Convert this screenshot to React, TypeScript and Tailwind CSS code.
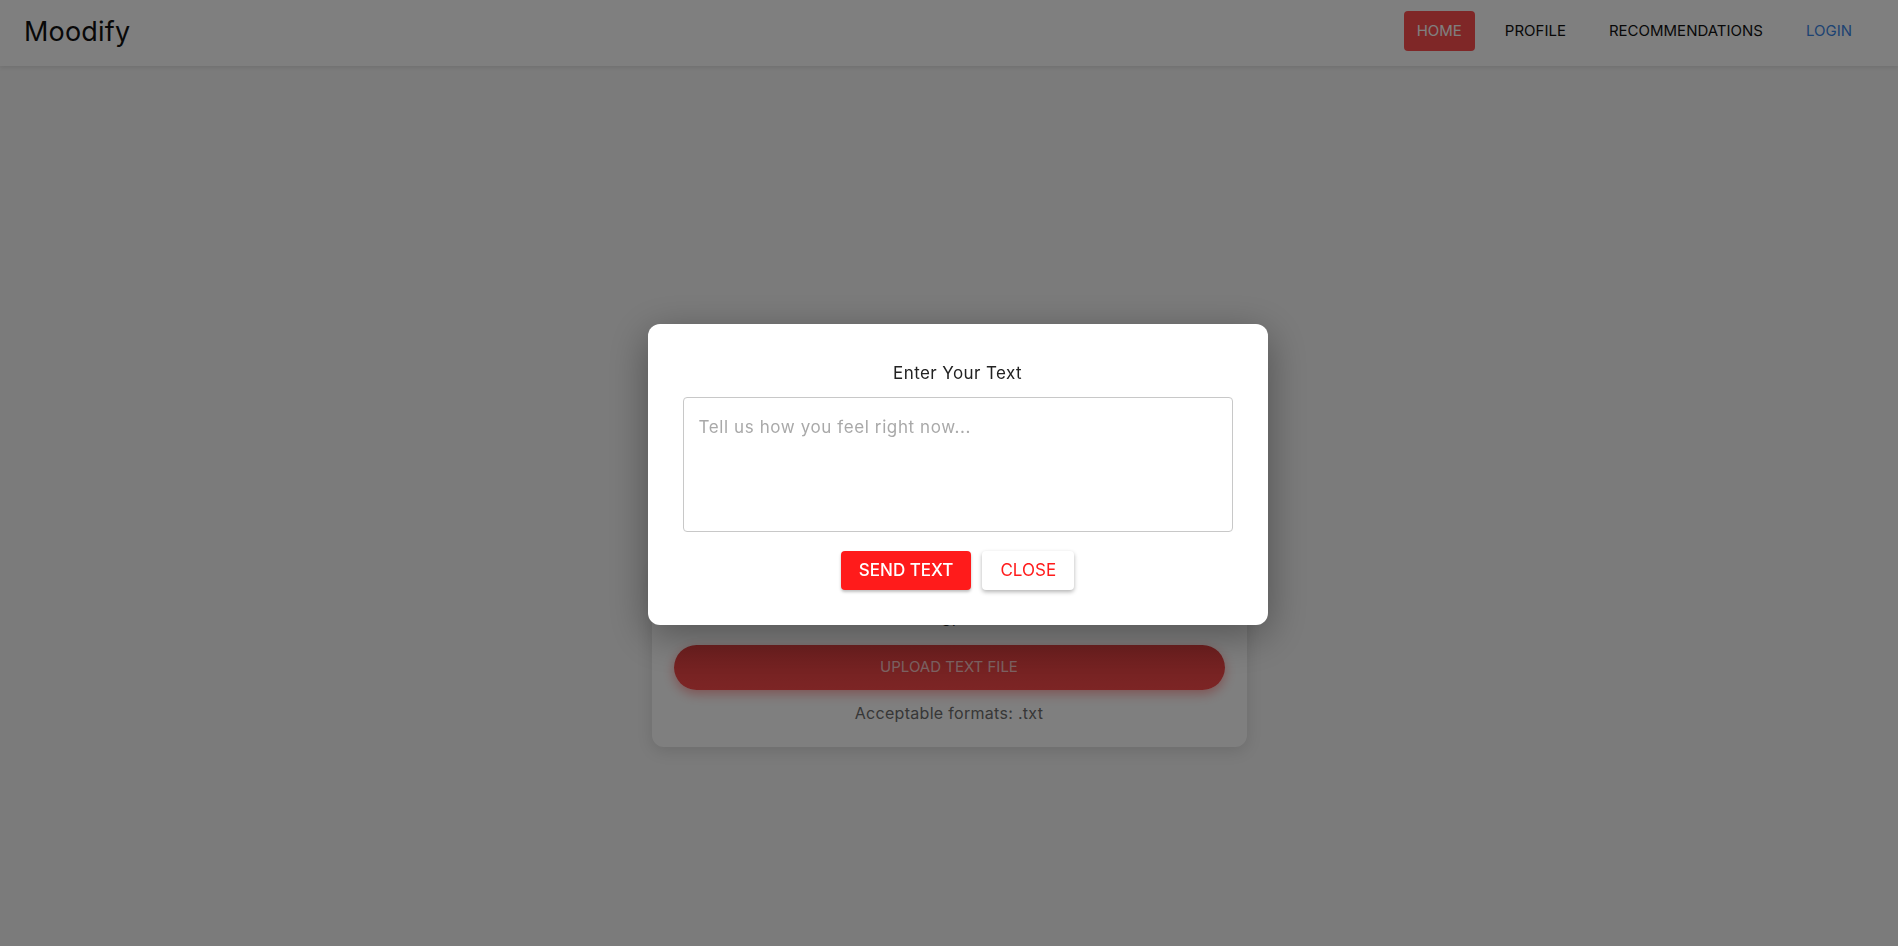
import React from "react";

const font = { fontFamily: '"Inter", "Noto Sans", "Liberation Sans", sans-serif' };

export default function App() {
  return (
    <div className="relative min-h-screen w-full bg-[#f6f6f6] text-[#111]" style={font}>
      {/* Navbar */}
      <nav className="flex h-[66px] items-center justify-between bg-white pb-[4px] pl-[24px] pr-[33px] shadow-[0_2px_4px_rgba(0,0,0,0.08)]">
        <div className="text-[27px] leading-none tracking-[0.2px] text-[#111]">Moodify</div>
        <div className="flex items-center gap-[17px]">
          <button className="flex h-[40px] items-center rounded-[4px] bg-[#ff4f4f] px-[13px] text-[15px] uppercase text-white">
            Home
          </button>
          <button className="flex h-[40px] items-center px-[13px] text-[15px] uppercase text-[#111]">
            Profile
          </button>
          <button className="flex h-[40px] items-center px-[13px] text-[15px] uppercase text-[#111]">
            Recommendations
          </button>
          <button className="flex h-[40px] items-center px-[13px] text-[15px] uppercase text-[#3b86e6]">
            Login
          </button>
        </div>
      </nav>

      {/* Main */}
      <main className="flex justify-center pt-[494px] pb-[200px]">
        <div className="flex w-[595px] flex-col items-center rounded-[12px] bg-white px-[22px] pt-[49px] pb-[22px] shadow-[0_4px_16px_rgba(0,0,0,0.12)]">
          <div className="h-[24px] text-[15px] leading-[24px] text-[#222]">Or</div>
          <button className="mt-[12px] h-[45px] w-full rounded-full bg-gradient-to-b from-[#dc3f3f] to-[#fa4a4a] text-[15px] uppercase text-white/70 shadow-[0_4px_12px_rgba(255,60,60,0.45)]">
            Upload Text File
          </button>
          <div className="mt-[11px] h-[24px] text-[16px] leading-[24px] tracking-[0.3px] text-[#6e6e6e]">
            Acceptable formats: .txt
          </div>
        </div>
      </main>

      {/* Modal overlay */}
      <div className="fixed inset-0 flex items-start justify-center bg-black/50 pt-[324px] pl-[17px]">
        <div className="flex w-[620px] flex-col rounded-[12px] bg-white px-[35px] pt-[36px] pb-[35px] shadow-[0_10px_40px_rgba(0,0,0,0.35)]">
          <div className="text-center text-[17px] leading-[26px] tracking-[0.4px] text-[#222]">Enter Your Text</div>
          <textarea
            className="mt-[11px] h-[135px] w-full resize-none rounded-[4px] border border-[#c8c8c8] px-[15px] py-[16px] text-[17px] leading-[26px] tracking-[0.6px] text-[#222] placeholder:text-[#a9a9a9] focus:outline-none"
            style={font}
            placeholder="Tell us how you feel right now..."
          />
          <div className="mt-[19px] flex justify-center gap-[11px]">
            <button className="h-[39px] rounded-[4px] bg-[#ff1b1b] px-[18px] text-[17px] font-medium uppercase text-white shadow-[0_2px_3px_rgba(0,0,0,0.25)]">
              Send Text
            </button>
            <button className="h-[39px] rounded-[4px] bg-white px-[18px] text-[17px] uppercase text-[#ff1b1b] shadow-[0_2px_4px_rgba(0,0,0,0.3)]">
              Close
            </button>
          </div>
        </div>
      </div>
    </div>
  );
}
